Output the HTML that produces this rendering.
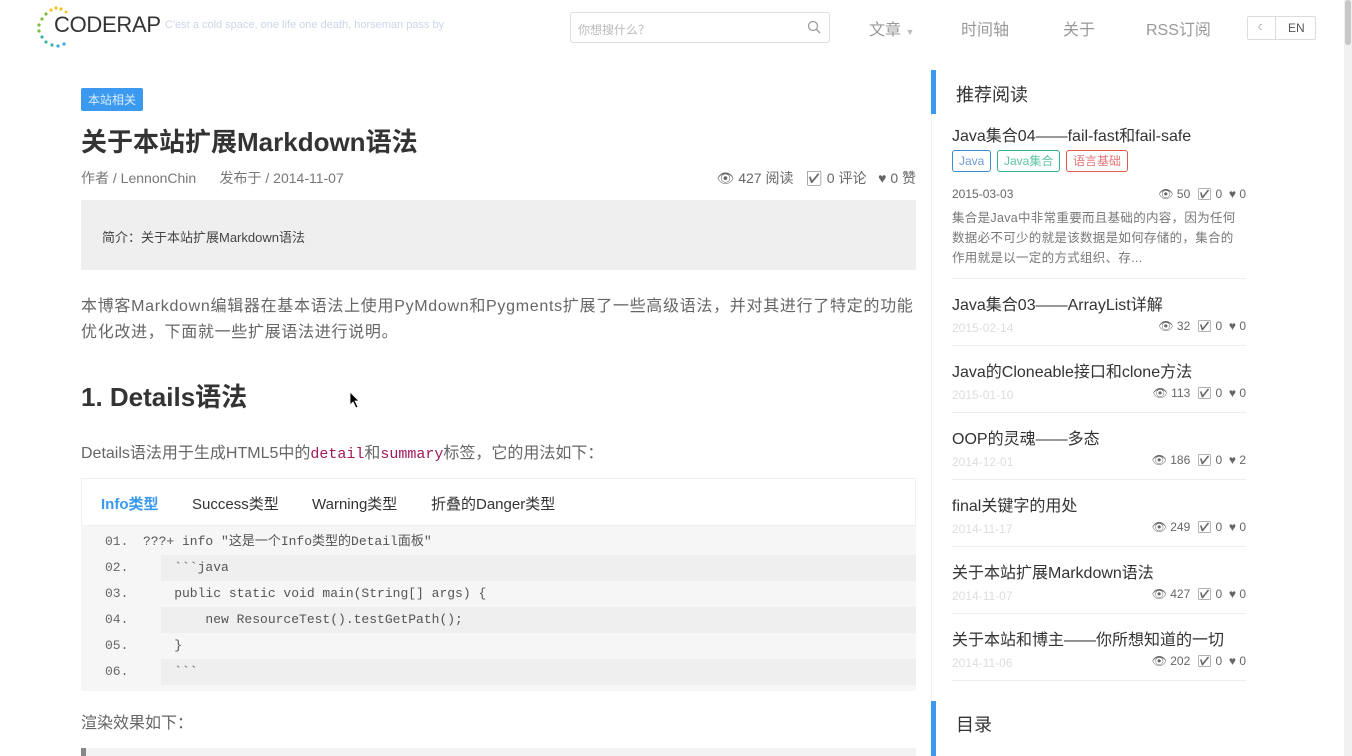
<!DOCTYPE html>
<html><head><meta charset="utf-8"><style>
*{margin:0;padding:0;box-sizing:border-box}
body{width:1352px;height:756px;overflow:hidden;background:#fff;font-family:"Liberation Sans","Noto Sans CJK SC",sans-serif;color:#333;position:relative}
.abs{position:absolute}
.sb{position:absolute;right:0;top:0;width:8px;height:756px;background:#f0f0f0}
.sb i{position:absolute;left:1px;top:0;width:6px;height:45px;background:#c8c8c8;border-radius:3px}
.nav a{position:absolute;top:16px;font-size:16px;color:#999}
.tag{position:absolute;font-size:12px;border:1px solid;border-radius:3px;padding:3px 6px;line-height:14px}
.code{position:absolute;left:81px;top:526px;width:835px;height:165px;background:#f6f6f6;font-family:"Liberation Mono","Noto Sans CJK SC",monospace;font-size:13px;color:#555;padding-top:3px}
.code div{height:26px;line-height:26px;padding-left:24px;white-space:pre}
.code div:nth-child(even){background:linear-gradient(to right,#f6f6f6 80px,#efefef 80px)}
.code b{font-weight:normal;color:#666;display:inline-block;width:38px}
.item{position:absolute;left:952px;width:294px;border-bottom:1px solid #eee}
.item .t{font-size:16px;color:#333}
.item .d{font-size:12px;color:#ddd;margin-top:6px}
.item .m{position:absolute;right:0;font-size:12px;color:#666}
</style></head><body>
<div class="sb"><i></i></div>
<svg class="abs" style="left:34px;top:4px" width="40" height="46">
<g fill="#f3c21b"><circle cx="22" cy="4" r="1.6"/><circle cx="27" cy="5" r="1.6"/><circle cx="17" cy="6" r="1.6"/><circle cx="32" cy="8" r="1.4"/></g>
<g fill="#7bbf3d"><circle cx="12" cy="10" r="1.6"/><circle cx="8" cy="15" r="1.6"/><circle cx="5" cy="21" r="1.6"/><circle cx="5" cy="27" r="1.6"/></g>
<g fill="#3bb4a5"><circle cx="8" cy="33" r="1.6"/><circle cx="12" cy="38" r="1.6"/><circle cx="18" cy="41" r="1.6"/></g>
<g fill="#3aa6e6"><circle cx="24" cy="42" r="1.6"/><circle cx="30" cy="40" r="1.6"/></g></svg>
<div class="abs" style="left:54px;top:12px;font-size:22px;color:#333;letter-spacing:-0.3px">CODERAP</div>
<div class="abs" style="left:165px;top:19px;font-size:11px;color:#cbd6e8">C'est a cold space, one life one death, horseman pass by</div>
<div class="abs" style="left:570px;top:12px;width:260px;height:31px;border:1px solid #ddd;border-radius:3px;font-size:12px;color:#bbb;padding:8px 7px">你想搜什么？</div>
<svg class="abs" style="left:807px;top:20px" width="14" height="14"><circle cx="6" cy="6" r="4.5" fill="none" stroke="#999" stroke-width="1.2"/><path d="M9.5 9.5 L13 13" stroke="#999" stroke-width="1.3"/></svg>
<div class="nav"><a style="left:869px">文章 <span style="font-size:9px;color:#bbb">▼</span></a><a style="left:961px">时间轴</a><a style="left:1063px">关于</a><a style="left:1146px">RSS订阅</a></div>
<div class="abs" style="left:1247px;top:16px;width:69px;height:24px;border:1px solid #ddd;border-radius:2px;font-size:12px;color:#555"><span style="position:absolute;left:0;width:28px;border-right:1px solid #ddd;height:22px;text-align:center;line-height:22px;font-size:8px">☾</span><span style="position:absolute;left:40px;top:4px">EN</span></div>
<div class="abs" style="left:81px;top:88px;background:#3b99f0;color:#dbeeff;font-size:12px;padding:3px 7px;border-radius:2px">本站相关</div>
<div class="abs" style="left:81px;top:122px;font-size:26px;font-weight:bold;color:#333">关于本站扩展Markdown语法</div>
<div class="abs" style="left:81px;top:168px;font-size:14px;color:#777">作者 / LennonChin&nbsp;&nbsp;&nbsp;&nbsp;&nbsp;&nbsp;发布于 / 2014-11-07</div>
<div class="abs" style="right:436px;top:168px;font-size:14px;color:#666">👁 427 阅读&nbsp;&nbsp;&nbsp;☑ 0 评论&nbsp;&nbsp;&nbsp;♥ 0 赞</div>
<div class="abs" style="left:81px;top:200px;width:835px;height:70px;background:#efefef;font-size:13px;color:#444;padding:27px 21px">简介：关于本站扩展Markdown语法</div>
<div class="abs" style="left:81px;top:294px;width:835px;font-size:16px;color:#666;line-height:26px;letter-spacing:0.7px">本博客Markdown编辑器在基本语法上使用PyMdown和Pygments扩展了一些高级语法，并对其进行了特定的功能优化改进，下面就一些扩展语法进行说明。</div>
<div class="abs" style="left:81px;top:377px;font-size:26px;font-weight:bold;color:#333">1. Details语法</div>
<div class="abs" style="left:81px;top:439px;font-size:16px;color:#666">Details语法用于生成HTML5中的<code style="font-family:'Liberation Mono',monospace;color:#a2185b;font-size:15px">detail</code>和<code style="font-family:'Liberation Mono',monospace;color:#a2185b;font-size:15px">summary</code>标签，它的用法如下：</div>
<div class="abs" style="left:81px;top:478px;width:835px;height:48px;border:1px solid #f0f0f0;font-size:15px;color:#333"><span style="position:absolute;left:19px;top:14px;color:#3b99f0;font-weight:bold">Info类型</span><span style="position:absolute;left:110px;top:14px">Success类型</span><span style="position:absolute;left:230px;top:14px">Warning类型</span><span style="position:absolute;left:349px;top:14px">折叠的Danger类型</span></div>
<div class="code">
<div><b>01.</b>???+ info "这是一个Info类型的Detail面板"</div>
<div><b>02.</b>    &#96;&#96;&#96;java</div>
<div><b>03.</b>    public static void main(String[] args) {</div>
<div><b>04.</b>        new ResourceTest().testGetPath();</div>
<div><b>05.</b>    }</div>
<div><b>06.</b>    &#96;&#96;&#96;</div>
</div>
<div class="abs" style="left:81px;top:709px;font-size:16px;color:#666">渲染效果如下：</div>
<div class="abs" style="left:81px;top:748px;width:835px;height:8px;background:#f3f3f3;border-left:5px solid #888"></div>
<div class="abs" style="left:931px;top:70px;width:1px;height:686px;background:#f0f0f0"></div>
<div class="abs" style="left:931px;top:70px;width:5px;height:44px;background:#3b99f0"></div>
<div class="abs" style="left:956px;top:81px;font-size:18px;color:#333">推荐阅读</div>
<div class="abs" style="left:931px;top:701px;width:5px;height:55px;background:#3b99f0"></div>
<div class="abs" style="left:956px;top:711px;font-size:18px;color:#333">目录</div>
<div class="item" style="top:122px;height:157px"><div class="t">Java集合04——fail-fast和fail-safe</div>
<span class="tag" style="left:0;top:28px;color:#6d9ad6;border-color:#3b8ad6">Java</span><span class="tag" style="left:45px;top:28px;color:#5ec4a6;border-color:#2fb38e">Java集合</span><span class="tag" style="left:114px;top:28px;color:#e07575;border-color:#e05a4a">语言基础</span>
<div style="position:absolute;top:65px;font-size:12px;color:#666">2015-03-03</div><div class="m" style="top:65px">👁 50&nbsp;&nbsp;☑ 0&nbsp;&nbsp;♥ 0</div>
<div style="position:absolute;top:86px;font-size:12.5px;color:#777;line-height:20px;letter-spacing:0.3px">集合是Java中非常重要而且基础的内容，因为任何数据必不可少的就是该数据是如何存储的，集合的作用就是以一定的方式组织、存...</div></div>
<div class="item" style="top:291px;height:55px"><div class="t">Java集合03——ArrayList详解</div><div class="d">2015-02-14</div><div class="m" style="top:28px">👁 32&nbsp;&nbsp;☑ 0&nbsp;&nbsp;♥ 0</div></div>
<div class="item" style="top:358px;height:55px"><div class="t">Java的Cloneable接口和clone方法</div><div class="d">2015-01-10</div><div class="m" style="top:28px">👁 113&nbsp;&nbsp;☑ 0&nbsp;&nbsp;♥ 0</div></div>
<div class="item" style="top:425px;height:55px"><div class="t">OOP的灵魂——多态</div><div class="d">2014-12-01</div><div class="m" style="top:28px">👁 186&nbsp;&nbsp;☑ 0&nbsp;&nbsp;♥ 2</div></div>
<div class="item" style="top:492px;height:55px"><div class="t">final关键字的用处</div><div class="d">2014-11-17</div><div class="m" style="top:28px">👁 249&nbsp;&nbsp;☑ 0&nbsp;&nbsp;♥ 0</div></div>
<div class="item" style="top:559px;height:55px"><div class="t">关于本站扩展Markdown语法</div><div class="d">2014-11-07</div><div class="m" style="top:28px">👁 427&nbsp;&nbsp;☑ 0&nbsp;&nbsp;♥ 0</div></div>
<div class="item" style="top:626px;height:55px"><div class="t">关于本站和博主——你所想知道的一切</div><div class="d">2014-11-06</div><div class="m" style="top:28px">👁 202&nbsp;&nbsp;☑ 0&nbsp;&nbsp;♥ 0</div></div>
<svg class="abs" style="left:349px;top:391px" width="12" height="18"><path d="M1 1 L1 14 L4 11 L7 17 L9 16 L6 10 L10 10 Z" fill="#000" stroke="#fff" stroke-width="0.8"/></svg>
</body></html>
